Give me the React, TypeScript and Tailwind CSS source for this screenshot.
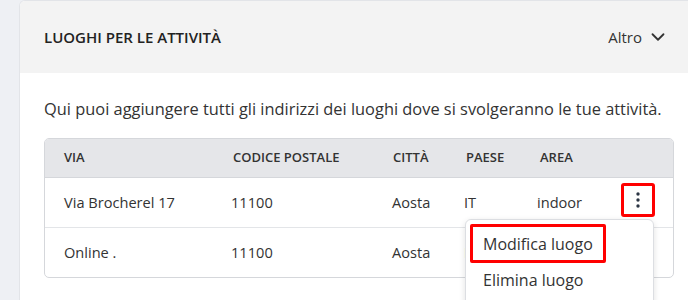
import React from 'react'
import { ChevronDown } from 'lucide-react'

const rows = [
  { via: 'Via Brocherel 17', cap: '11100', city: 'Aosta', country: 'IT', area: 'indoor' },
  { via: 'Online .', cap: '11100', city: 'Aosta', country: 'IT', area: '' },
]

const cols = 'grid grid-cols-[169px_160px_73px_74px_1fr_70px] items-center'

function Kebab() {
  return (
    <svg width="6" height="18" viewBox="0 0 6 18" className="text-[#2b3544]">
      <circle cx="3" cy="3" r="1.7" fill="currentColor" />
      <circle cx="3" cy="9" r="1.7" fill="currentColor" />
      <circle cx="3" cy="15" r="1.7" fill="currentColor" />
    </svg>
  )
}

export default function App() {
  return (
    <div className="flex min-h-[300px] bg-[#eef0f4] pl-[19px] font-['Open_Sans',sans-serif] text-[#333]">
      <div className="flex-1 overflow-hidden rounded-tl-[6px] border-l border-t border-[#e2e4e8] bg-white">
        {/* header */}
        <div className="flex h-[72px] items-center justify-between bg-[#f3f3f3] pl-[24px] pr-[24px]">
          <h1 className="text-[15px] font-semibold text-[#222]">LUOGHI PER LE ATTIVITÀ</h1>
          <button className="flex items-center gap-[5px] text-[15px] text-[#333]">
            Altro
            <ChevronDown size={22} strokeWidth={2} className="-mr-[5px]" />
          </button>
        </div>

        {/* body */}
        <div className="pl-[24px] pt-[24px]">
          <p className="text-[16.4px] leading-[24px] text-[#333]">
            Qui puoi aggiungere tutti gli indirizzi dei luoghi dove si svolgeranno le tue attività.
          </p>

          <div className="relative mt-[17px] w-[630px]">
            <div className="overflow-hidden rounded-[5px] border border-[#d5d7db]">
              <div className={`${cols} h-[39px] border-b border-[#d5d7db] bg-[#e5e6e9] text-[13px] font-semibold text-[#333]`}>
                <div className="pl-[19px]">VIA</div>
                <div className="pl-[19px]">CODICE POSTALE</div>
                <div className="pl-[19px]">CITTÀ</div>
                <div className="pl-[19px]">PAESE</div>
                <div className="pl-[19px]">AREA</div>
                <div />
              </div>
              {rows.map((r, i) => (
                <div
                  key={i}
                  className={`${cols} text-[14.6px] text-[#333] ${i === 0 ? 'h-[50px] border-b border-[#e3e5e8]' : 'h-[49px]'}`}
                >
                  <div className="pl-[19px]">{r.via}</div>
                  <div className="pl-[17px]">{r.cap}</div>
                  <div className="pl-[18px]">{r.city}</div>
                  <div className="pl-[17px]">{r.country}</div>
                  <div className="pl-[16px]">{r.area}</div>
                  <div className="flex justify-start pl-[18px]">
                    {i === 0 && (
                      <button className="-mt-[5px] flex h-[34px] w-[34px] items-center justify-center rounded-[3px] border-[3px] border-[#ff0000]">
                        <Kebab />
                      </button>
                    )}
                  </div>
                </div>
              ))}
            </div>

            {/* dropdown */}
            <div className="absolute left-[421px] top-[81px] w-[189px] rounded-[6px] border border-[#dcdee2] bg-white pt-[4px] pl-[4px] pb-[20px] shadow-[0_2px_6px_rgba(0,0,0,0.12)]">
              <div className="inline-flex h-[39px] items-center rounded-[2px] border-[3px] border-[#ff0000] px-[10px] text-[16px] text-[#333]">
                Modifica luogo
              </div>
              <div className="flex h-[33px] items-center border-[3px] border-transparent px-[10px] text-[16px] text-[#333]">
                Elimina luogo
              </div>
            </div>
          </div>
        </div>
      </div>
    </div>
  )
}
